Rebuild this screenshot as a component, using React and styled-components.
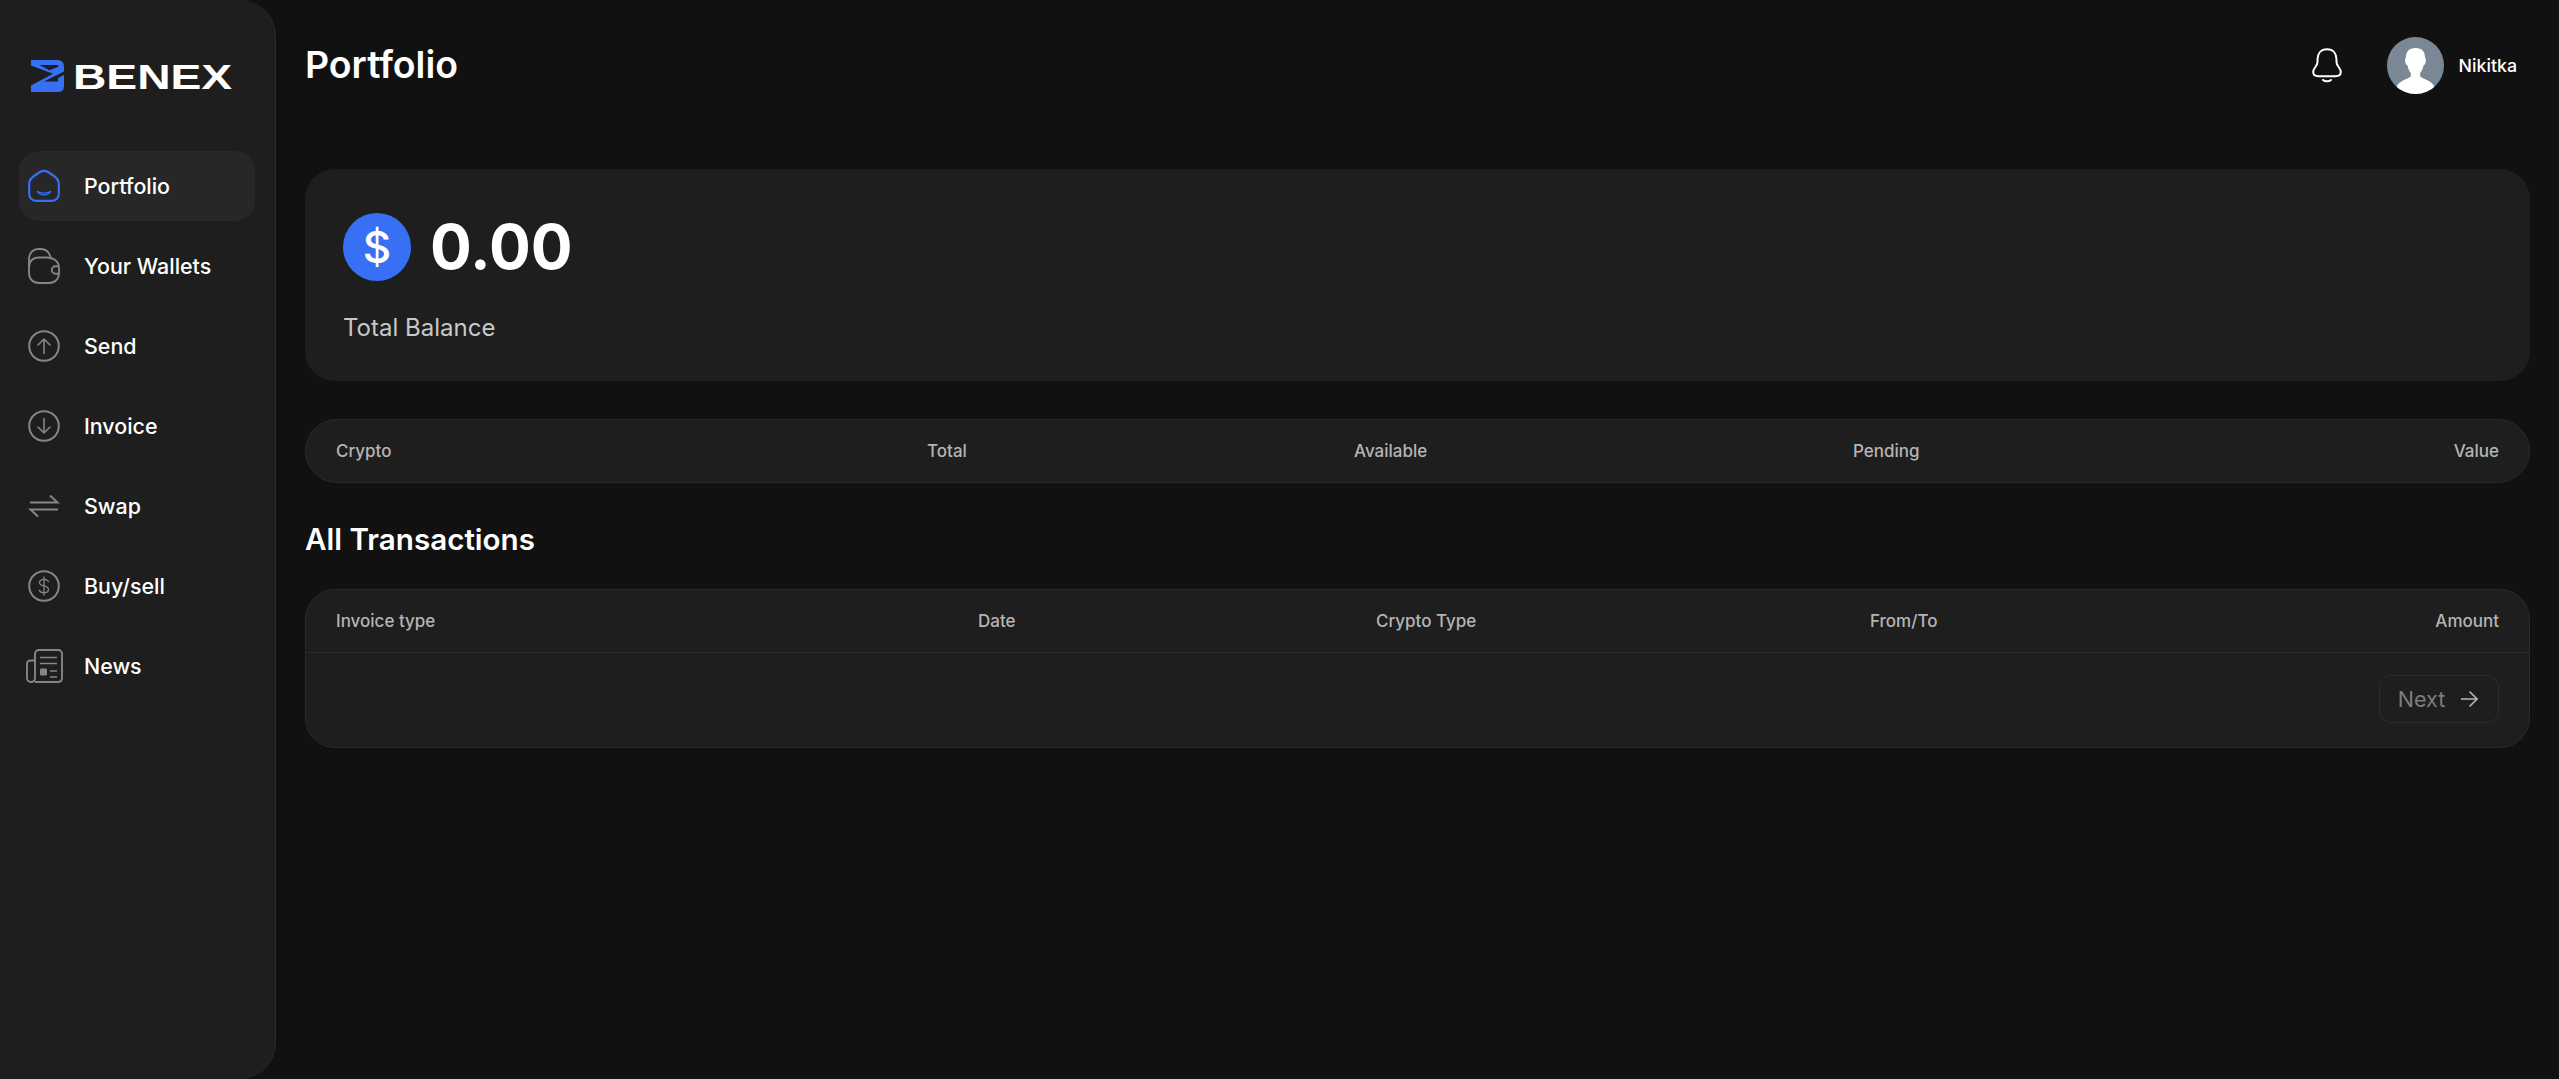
import React from "react";
import styled, { createGlobalStyle } from "styled-components";

const Global = createGlobalStyle`
  html, body { margin: 0; padding: 0; background: #111111; }
  * { box-sizing: border-box; }
  body { font-family: "Inter", "Noto Sans", sans-serif; color: #fff; }
`;

const Page = styled.div`
  display: flex;
  height: 1079px;
  overflow: hidden;
  background: #111111;
`;

const Sidebar = styled.aside`
  width: 276px;
  flex: none;
  height: 100%;
  background: #1e1e1e;
  border-right: 1px solid #2a2a2a;
  border-radius: 0 36px 36px 0;
  padding: 60px 19px 0;
`;

const LogoRow = styled.div`
  display: flex;
  align-items: center;
  height: 33px;
  margin-left: 12px;
  margin-bottom: 58px;
`;

const LogoText = styled.span`
  font-family: "Liberation Sans", Arial, sans-serif;
  font-weight: 700;
  font-size: 35px;
  line-height: 33px;
  margin-left: 8px;
  display: inline-block;
  transform: scaleX(1.32);
  transform-origin: left center;
  color: #fff;
`;

const Nav = styled.nav`
  display: flex;
  flex-direction: column;
  gap: 10px;
  width: 236px;
`;

const NavItem = styled.a`
  display: flex;
  align-items: center;
  height: 70px;
  border-radius: 20px;
  padding-left: 9px;
  background: ${(p) => (p.$active ? "#272727" : "transparent")};
  font-size: 21.4px;
  font-weight: 500;
  color: #fff;
`;

const NavIcon = styled.span`
  width: 32px;
  height: 36px;
  margin-right: 24px;
  display: flex;
  align-items: center;
  justify-content: center;
  flex: none;
  color: ${(p) => (p.$active ? "#376ff5" : "#858585")};
  svg { display: block; overflow: visible; }
`;

const Main = styled.main`
  flex: 1;
  min-width: 0;
  padding: 0 29px 0 29px;
`;

const Header = styled.header`
  display: flex;
  align-items: center;
  justify-content: space-between;
  height: 131px;
  margin-bottom: 38px;
`;

const Title = styled.h1`
  margin: 0 0 3px 0;
  font-size: 37.4px;
  font-weight: 600;
  color: #fff;
`;

const UserArea = styled.div`
  display: flex;
  align-items: center;
  margin-right: 13px;
`;

const Bell = styled.span`
  display: flex;
  margin-right: 45px;
`;

const Avatar = styled.span`
  display: block;
  width: 57px;
  height: 57px;
  border-radius: 50%;
  overflow: hidden;
  margin-right: 15px;
`;

const UserName = styled.span`
  font-size: 17.8px;
  font-weight: 500;
  color: #fff;
`;

const BalanceCard = styled.section`
  height: 212px;
  background: #1e1e1e;
  border-radius: 30px;
  padding: 44px 38px 0;
`;

const BalanceRow = styled.div`
  display: flex;
  align-items: center;
  gap: 19px;
`;

const Coin = styled.span`
  width: 68px;
  height: 68px;
  border-radius: 50%;
  background: #376ff5;
  display: flex;
  align-items: center;
  justify-content: center;
  font-size: 44px;
  font-weight: 500;
  color: #fff;
`;

const Amount = styled.span`
  font-size: 62px;
  font-weight: 700;
  line-height: 68px;
  color: #fff;
`;

const BalanceLabel = styled.div`
  margin-top: 32px;
  font-size: 24px;
  font-weight: 400;
  line-height: 30px;
  color: #c8c8c8;
`;

const CryptoBar = styled.div`
  margin-top: 38px;
  background: #1e1e1e;
  border: 1px solid #2a2a2a;
  border-radius: 32px;
`;

const ColumnRow = styled.div`
  display: grid;
  grid-template-columns: ${(p) => p.$cols};
  align-items: center;
  height: ${(p) => p.$h}px;
  padding: 0 30px;
  font-size: 17px;
  font-weight: 500;
  color: #b5b5b5;
  span:last-child { text-align: right; }
`;

const SectionTitle = styled.h2`
  margin: 37px 0 0 0;
  height: 38px;
  line-height: 38px;
  font-size: 29.6px;
  font-weight: 600;
  color: #fff;
`;

const TableCard = styled.section`
  margin-top: 31px;
  background: #1e1e1e;
  border: 1px solid #2a2a2a;
  border-radius: 30px;
`;

const Divider = styled.div`
  height: 1px;
  background: #2a2a2a;
`;

const Pager = styled.div`
  display: flex;
  justify-content: flex-end;
  padding: 22px 30px 24px;
`;

const NextButton = styled.button`
  display: flex;
  align-items: center;
  justify-content: center;
  gap: 15px;
  width: 120px;
  height: 48px;
  background: transparent;
  border: 1px solid #2c2c2c;
  border-radius: 12px;
  font-family: inherit;
  font-size: 21.5px;
  font-weight: 400;
  color: #7d7d7d;
  padding: 0 2px 0 0;
`;

const Logo = () => (
  <svg width="34" height="33" viewBox="0 0 34 33">
    <path
      fill="#376ff5"
      fillRule="evenodd"
      d="M0 0H26Q33 0 33 7V11.5L13 21.5H27V18L33 15V26Q33 32 27 32H0V25.5L22 13.8L0 5.5ZM8.5 5L18.5 10.3L27.5 6.8Q27.5 5 26 5Z"
    />
  </svg>
);

const HomeIcon = () => (
  <svg width="32" height="32" viewBox="0 0 32 32" fill="none" stroke="currentColor" strokeWidth="2.2">
    <path d="M1.2 14C1.2 10 3 8 6 6L12 2C14.5 .5 17.5 .5 20 2L26 6C29 8 30.8 10 30.8 14V23C30.8 28 28 30.8 24 30.8H8C4 30.8 1.2 28 1.2 23Z" strokeLinejoin="round" />
    <path d="M9.5 21.5C12 26 20 26 22.5 21.5" strokeWidth="1.4" strokeLinecap="round" />
    <path d="M9.5 21.5C12.5 23.5 19.5 23.5 22.5 21.5" strokeWidth="1.2" strokeLinecap="round" />
  </svg>
);

const WalletIcon = () => (
  <svg width="32" height="36" viewBox="0 0 32 36" fill="none" stroke="currentColor" strokeWidth="1.9">
    <path d="M1 19C1 13 5 9.5 11 9.5H18C26 9.5 31 13.5 31 20V25C31 31 27 35 21 35H11C5 35 1 31 1 25Z" />
    <path d="M1 19V11C1 5 5 1 11 1H13C18 1 21.5 4 23 10.5" />
    <path d="M31 18.3H27.5A3.7 3.7 0 0 0 27.5 25.7H31" />
  </svg>
);

const CircleArrow = ({ down }) => (
  <svg width="32" height="32" viewBox="0 0 32 32" fill="none" stroke="currentColor" strokeWidth="2">
    <circle cx="16" cy="16" r="14.8" />
    {down ? (
      <path d="M16 8.5V23M10 17L16 23L22 17" strokeWidth="1.6" strokeLinecap="round" strokeLinejoin="round" />
    ) : (
      <path d="M16 23.5V9M10 15L16 9L22 15" strokeWidth="1.6" strokeLinecap="round" strokeLinejoin="round" />
    )}
  </svg>
);

const SwapIcon = () => (
  <svg width="30" height="24" viewBox="0 0 30 24" fill="none" stroke="currentColor" strokeWidth="2">
    <path d="M1 8.5H28.5L21 1.5" />
    <path d="M29 15.5H1.5L9 22.5" />
  </svg>
);

const DollarCircle = () => (
  <svg width="32" height="32" viewBox="0 0 32 32" fill="none" stroke="currentColor" strokeWidth="2">
    <circle cx="16" cy="16" r="14.8" />
    <path d="M20.5 11.5C19.8 10 18.3 9.3 16 9.3C13.3 9.3 11.5 10.6 11.5 12.5C11.5 17.3 20.5 14.6 20.5 19.5C20.5 21.5 18.7 22.7 16 22.7C13.5 22.7 11.9 21.8 11.3 20.2M16 7V25" strokeWidth="1.3" strokeLinecap="round" />
  </svg>
);

const NewsIcon = () => (
  <svg width="37" height="34" viewBox="0 0 37 34" fill="none" stroke="currentColor" strokeWidth="1.9">
    <path d="M9 33H32C34.5 33 36 31.5 36 29V5C36 2.5 34.5 1 32 1H13C10.5 1 9 2.5 9 5V29C9 31.5 7.5 33 5 33C2.5 33 1 31.5 1 29V15C1 13 2.5 11.5 4.5 11.5H9" strokeLinejoin="round" />
    <path d="M14 8.5H31M14 14.5H31M24 22H31M24 28H31" strokeWidth="1.6" />
    <rect x="14" y="19.5" width="7" height="7" rx="1.2" fill="currentColor" stroke="none" />
  </svg>
);

const BellIcon = () => (
  <svg width="30" height="35" viewBox="0 0 30 35" fill="none" stroke="#fff" strokeWidth="2" strokeLinecap="round" strokeLinejoin="round">
    <path d="M15 1.2C8.5 1.2 5.5 6 5.5 11.5V14C5.5 18 1.2 20 1.2 24C1.2 27 3 28.2 6.5 28.2H23.5C27 28.2 28.8 27 28.8 24C28.8 20 24.5 18 24.5 14V11.5C24.5 6 21.5 1.2 15 1.2Z" />
    <path d="M11 32C13 33.8 17 33.8 19 32" />
  </svg>
);

const AvatarArt = () => (
  <svg width="57" height="57" viewBox="0 0 57 57">
    <rect width="57" height="57" fill="#7a8895" />
    <path fill="#fff" d="M28.5 11C21.5 11 19 15 19 20.5C18 21 18 24.5 18.5 26C19 27.5 20 28 20.5 28.5C21.3 32 22.5 34.5 23.8 36V39.5C20 42.5 13 43 10 49V57H47V49C44 43 37 42.5 33.2 39.5V36C34.5 34.5 35.7 32 36.5 28.5C37 28 38 27.5 38.5 26C39 24.5 39 21 38 20.5C38 15 35.5 11 28.5 11Z" />
  </svg>
);

const ArrowRight = () => (
  <svg width="18" height="18" viewBox="0 0 18 18" fill="none" stroke="#b5b5b5" strokeWidth="1.6">
    <path d="M1 9H16.5M9.5 1.5L17 9L9.5 16.5" />
  </svg>
);

const navItems = [
  { label: "Portfolio", icon: <HomeIcon />, active: true },
  { label: "Your Wallets", icon: <WalletIcon /> },
  { label: "Send", icon: <CircleArrow /> },
  { label: "Invoice", icon: <CircleArrow down /> },
  { label: "Swap", icon: <SwapIcon /> },
  { label: "Buy/sell", icon: <DollarCircle /> },
  { label: "News", icon: <NewsIcon /> },
];

const cryptoCols = ["Crypto", "Total", "Available", "Pending", "Value"];
const txCols = ["Invoice type", "Date", "Crypto Type", "From/To", "Amount"];

export default function App() {
  return (
    <Page>
      <Global />
      <Sidebar>
        <LogoRow>
          <Logo />
          <LogoText>BENEX</LogoText>
        </LogoRow>
        <Nav>
          {navItems.map((n) => (
            <NavItem key={n.label} $active={n.active}>
              <NavIcon $active={n.active}>{n.icon}</NavIcon>
              {n.label}
            </NavItem>
          ))}
        </Nav>
      </Sidebar>
      <Main>
        <Header>
          <Title>Portfolio</Title>
          <UserArea>
            <Bell><BellIcon /></Bell>
            <Avatar><AvatarArt /></Avatar>
            <UserName>Nikitka</UserName>
          </UserArea>
        </Header>
        <BalanceCard>
          <BalanceRow>
            <Coin>$</Coin>
            <Amount>0.00</Amount>
          </BalanceRow>
          <BalanceLabel>Total Balance</BalanceLabel>
        </BalanceCard>
        <CryptoBar>
          <ColumnRow $h={62} $cols="591px 427px 499px 1fr 60px">
            {cryptoCols.map((c) => <span key={c}>{c}</span>)}
          </ColumnRow>
        </CryptoBar>
        <SectionTitle>All Transactions</SectionTitle>
        <TableCard>
          <ColumnRow $h={62} $cols="642px 398px 494px 1fr 80px">
            {txCols.map((c) => <span key={c}>{c}</span>)}
          </ColumnRow>
          <Divider />
          <Pager>
            <NextButton>Next <ArrowRight /></NextButton>
          </Pager>
        </TableCard>
      </Main>
    </Page>
  );
}
